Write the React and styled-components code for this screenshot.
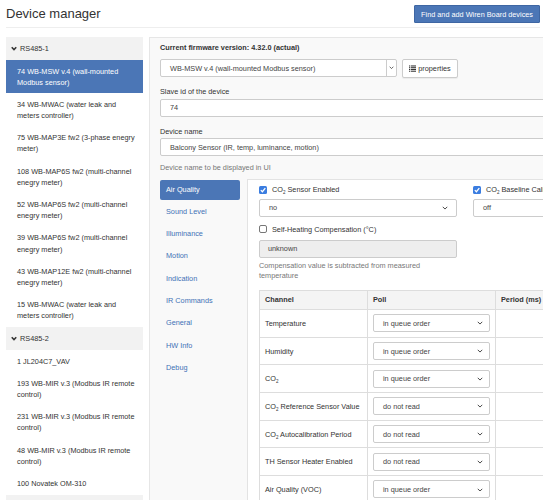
import React from 'react';
import styled, { createGlobalStyle } from 'styled-components';

const GlobalStyle = createGlobalStyle`
  html, body {
    margin: 0;
    padding: 0;
    background: #fff;
    overflow: hidden;
  }
  body {
    font-family: "Liberation Sans", Arial, sans-serif;
    font-size: 7.3px;
    line-height: 11px;
    color: #333;
  }
  * {
    box-sizing: border-box;
  }
`;

const Page = styled.div`
  width: 543px;
  height: 500px;
  overflow: hidden;
  padding: 5px 3px 0 6px;
`;

const Header = styled.div`
  display: flex;
  justify-content: space-between;
  align-items: flex-start;
  padding-bottom: 4px;
  border-bottom: 1px solid #eee;
`;

const Title = styled.h1`
  margin: 0;
  font-size: 13px;
  line-height: 18px;
  font-weight: 400;
  color: #333;
`;

const PrimaryButton = styled.button`
  height: 18px;
  padding: 0 6px;
  background: #4b76b6;
  border: 1px solid #3e66a3;
  border-radius: 1px;
  color: #fff;
  font-family: inherit;
  font-size: 7.3px;
`;

const Body = styled.div`
  display: flex;
  gap: 6px;
  margin-top: 9px;
`;

const Sidebar = styled.div`
  flex: 0 0 137px;
`;

const GroupHeader = styled.div`
  height: 23px;
  display: flex;
  align-items: center;
  gap: 3px;
  padding-left: 5px;
  background: #f2f2f2;
`;

const DeviceItem = styled.div`
  padding: 5.6px 6px 5.6px 11px;
  line-height: 11.1px;
  white-space: pre-line;
  background: ${p => (p.$active ? '#4b76b6' : '#fff')};
  color: ${p => (p.$active ? '#fff' : '#333')};
`;

const Main = styled.div`
  flex: 0 0 480px;
  border: 1px solid #e6e6e6;
  background: #f9f9f9;
  padding: 4px 0 0 10px;
`;

const Firmware = styled.div`
  font-weight: 700;
`;

const ControlRow = styled.div`
  display: flex;
  gap: 5px;
  margin-top: 6px;
`;

const FieldLabel = styled.div`
  margin-top: ${p => p.$gap || 8}px;
`;

const Box = styled.div`
  display: flex;
  align-items: center;
  justify-content: space-between;
  height: ${p => p.$h || 18}px;
  width: ${p => p.$w || 'auto'};
  margin-top: ${p => p.$mt || 0}px;
  padding-left: ${p => p.$pl || 9}px;
  padding-right: ${p => p.$pr || 8}px;
  border: 1px solid #ccc;
  border-radius: 2px;
  background: ${p => (p.$disabled ? '#eee' : '#fff')};
  color: #444;
`;

const FirmwareSelect = styled(Box)`
  padding-right: 0;
`;

const Caret = styled.div`
  align-self: stretch;
  width: 10px;
  border-left: 1px solid #ccc;
  display: flex;
  align-items: center;
  justify-content: center;
`;

const PropsButton = styled.button`
  height: 19px;
  width: 56px;
  margin-top: -0.5px;
  display: flex;
  align-items: center;
  justify-content: center;
  gap: 2px;
  padding: 0;
  border: 1px solid #ccc;
  border-radius: 2px;
  background: #fff;
  box-shadow: 0 1px 1px rgba(0, 0, 0, 0.06);
  color: #333;
  font-family: inherit;
  font-size: 7.3px;
`;

const Help = styled.div`
  margin-top: ${p => p.$mt || 5.5}px;
  color: #777;
  line-height: ${p => p.$lh || 11}px;
  max-width: ${p => p.$max || 'none'};
`;

const Tabs = styled.div`
  display: flex;
  margin-top: 6px;
`;

const NavCol = styled.div`
  flex: 0 0 80px;
  display: flex;
  flex-direction: column;
  gap: 2.3px;
  padding-top: 1px;
`;

const Pill = styled.div`
  height: 20px;
  line-height: 20px;
  padding-left: 6px;
  border-radius: 2px;
  background: ${p => (p.$active ? '#4b76b6' : 'transparent')};
  color: ${p => (p.$active ? '#fff' : '#3f72b6')};
`;

const TabContent = styled.div`
  flex: 1;
  margin-left: 7px;
  min-height: 340px;
  border-left: 1px solid #e3e3e3;
  border-top: 1px solid #e3e3e3;
  background: #fff;
  padding: 4.5px 0 0 11px;
`;

const FormRow = styled.div`
  display: flex;
  gap: 16px;
`;

const FieldCol = styled.div`
  flex: 0 0 198px;
`;

const CheckLabel = styled.div`
  display: flex;
  align-items: center;
  gap: 5px;
  height: 11px;
  margin-top: ${p => p.$mt || 0}px;
  white-space: nowrap;
`;

const Sub = styled.sub`
  font-size: 4.5px;
  vertical-align: -1.5px;
  line-height: 0;
`;

const Table = styled.table`
  margin-top: 9px;
  border-collapse: collapse;
  border: 1px solid #ddd;
  table-layout: fixed;
`;

const Th = styled.th`
  height: 19.5px;
  width: ${p => p.$w}px;
  padding: 0 5px;
  text-align: left;
  font-weight: 700;
  background: #f4f4f4;
  border-left: 1px solid #ddd;
`;

const Td = styled.td`
  height: 27.7px;
  padding: 0 5px;
  border-top: 1px solid #ddd;
  border-left: 1px solid #ddd;
  white-space: nowrap;
`;

const Chevron = ({ size = 6 }) => (
  <svg width={size} height={size * 0.65} viewBox="0 0 8 5" fill="none">
    <path d="M1 1 L4 4 L7 1" stroke="#444" strokeWidth="1.3" />
  </svg>
);

const GroupChevron = () => (
  <svg width="6" height="5" viewBox="0 0 8 6">
    <path d="M1 1.2 L4 4.5 L7 1.2" stroke="#333" strokeWidth="2" fill="none" />
  </svg>
);

const ListIcon = () => (
  <svg width="7" height="7" viewBox="0 0 8 8" fill="#333">
    <rect x="0" y="0.5" width="1.5" height="1.2" />
    <rect x="2.3" y="0.5" width="5.7" height="1.2" />
    <rect x="0" y="2.5" width="1.5" height="1.2" />
    <rect x="2.3" y="2.5" width="5.7" height="1.2" />
    <rect x="0" y="4.5" width="1.5" height="1.2" />
    <rect x="2.3" y="4.5" width="5.7" height="1.2" />
    <rect x="0" y="6.5" width="1.5" height="1.2" />
    <rect x="2.3" y="6.5" width="5.7" height="1.2" />
  </svg>
);

const Checkbox = ({ checked }) =>
  checked ? (
    <svg width="8" height="8" viewBox="0 0 8 8">
      <rect x="0" y="0" width="8" height="8" rx="1.5" fill="#3b7de0" />
      <path d="M1.8 4.1 L3.4 5.7 L6.3 2.2" stroke="#fff" strokeWidth="1.3" fill="none" />
    </svg>
  ) : (
    <svg width="8" height="8" viewBox="0 0 8 8">
      <rect x="0.5" y="0.5" width="7" height="7" rx="1.5" fill="#fff" stroke="#777" />
    </svg>
  );

const CO2 = () => (
  <>
    CO<Sub>2</Sub>
  </>
);

const groups = [
  {
    name: 'RS485-1',
    devices: [
      '74 WB-MSW v.4 (wall-mounted\nModbus sensor)',
      '34 WB-MWAC (water leak and\nmeters controller)',
      '75 WB-MAP3E fw2 (3-phase enegry\nmeter)',
      '108 WB-MAP6S fw2 (multi-channel\nenegry meter)',
      '52 WB-MAP6S fw2 (multi-channel\nenegry meter)',
      '39 WB-MAP6S fw2 (multi-channel\nenegry meter)',
      '43 WB-MAP12E fw2 (multi-channel\nenegry meter)',
      '15 WB-MWAC (water leak and\nmeters controller)',
    ],
  },
  {
    name: 'RS485-2',
    devices: [
      '1 JL204C7_VAV',
      '193 WB-MIR v.3 (Modbus IR remote\ncontrol)',
      '231 WB-MIR v.3 (Modbus IR remote\ncontrol)',
      '48 WB-MIR v.3 (Modbus IR remote\ncontrol)',
      '100 Novatek OM-310',
    ],
  },
  { name: '', devices: [] },
];

const tabs = [
  'Air Quality',
  'Sound Level',
  'Illuminance',
  'Motion',
  'Indication',
  'IR Commands',
  'General',
  'HW Info',
  'Debug',
];

const channels = [
  { name: 'Temperature', poll: 'in queue order' },
  { name: 'Humidity', poll: 'in queue order' },
  { name: <CO2 />, poll: 'in queue order' },
  { name: <><CO2 /> Reference Sensor Value</>, poll: 'do not read' },
  { name: <><CO2 /> Autocalibration Period</>, poll: 'do not read' },
  { name: 'TH Sensor Heater Enabled', poll: 'do not read' },
  { name: 'Air Quality (VOC)', poll: 'in queue order' },
];

export default function App() {
  return (
    <Page>
      <GlobalStyle />
      <Header>
        <Title>Device manager</Title>
        <PrimaryButton>Find and add Wiren Board devices</PrimaryButton>
      </Header>
      <Body>
        <Sidebar>
          {groups.map((g, gi) => (
            <div key={gi}>
              <GroupHeader>
                {g.name && <GroupChevron />}
                {g.name}
              </GroupHeader>
              {g.devices.map((d, i) => (
                <DeviceItem key={d} $active={gi === 0 && i === 0}>
                  {d}
                </DeviceItem>
              ))}
            </div>
          ))}
        </Sidebar>
        <Main>
          <Firmware>Current firmware version: 4.32.0 (actual)</Firmware>
          <ControlRow>
            <FirmwareSelect $w="237px">
              WB-MSW v.4 (wall-mounted Modbus sensor)
              <Caret>
                <Chevron size={5} />
              </Caret>
            </FirmwareSelect>
            <PropsButton>
              <ListIcon />
              properties
            </PropsButton>
          </ControlRow>
          <FieldLabel>Slave id of the device</FieldLabel>
          <Box $mt={2}>74</Box>
          <FieldLabel $gap={9}>Device name</FieldLabel>
          <Box $mt={1.5}>Balcony Sensor (IR, temp, luminance, motion)</Box>
          <Help>Device name to be displayed in UI</Help>
          <Tabs>
            <NavCol>
              {tabs.map((t, i) => (
                <Pill key={t} $active={i === 0}>
                  {t}
                </Pill>
              ))}
            </NavCol>
            <TabContent>
              <FormRow>
                <FieldCol>
                  <CheckLabel>
                    <Checkbox checked />
                    <span>
                      <CO2 /> Sensor Enabled
                    </span>
                  </CheckLabel>
                  <Box $mt={4} $h={17.5}>
                    no
                    <Chevron />
                  </Box>
                  <CheckLabel $mt={7}>
                    <Checkbox />
                    <span>Self-Heating Compensation (°C)</span>
                  </CheckLabel>
                  <Box $mt={5} $disabled $pl={8}>
                    unknown
                  </Box>
                  <Help $mt={3} $lh={10} $max="190px">
                    Compensation value is subtracted from measured temperature
                  </Help>
                </FieldCol>
                <FieldCol>
                  <CheckLabel>
                    <Checkbox checked />
                    <span>
                      <CO2 /> Baseline Calibration
                    </span>
                  </CheckLabel>
                  <Box $mt={4} $h={17.5}>
                    off
                    <Chevron />
                  </Box>
                </FieldCol>
              </FormRow>
              <Table>
                <thead>
                  <tr>
                    <Th $w={108}>Channel</Th>
                    <Th $w={128}>Poll</Th>
                    <Th $w={110}>Period (ms)</Th>
                  </tr>
                </thead>
                <tbody>
                  {channels.map((c, i) => (
                    <tr key={i}>
                      <Td>{c.name}</Td>
                      <Td>
                        <Box $w="117px" $pr={6}>
                          {c.poll}
                          <Chevron />
                        </Box>
                      </Td>
                      <Td />
                    </tr>
                  ))}
                </tbody>
              </Table>
            </TabContent>
          </Tabs>
        </Main>
      </Body>
    </Page>
  );
}
